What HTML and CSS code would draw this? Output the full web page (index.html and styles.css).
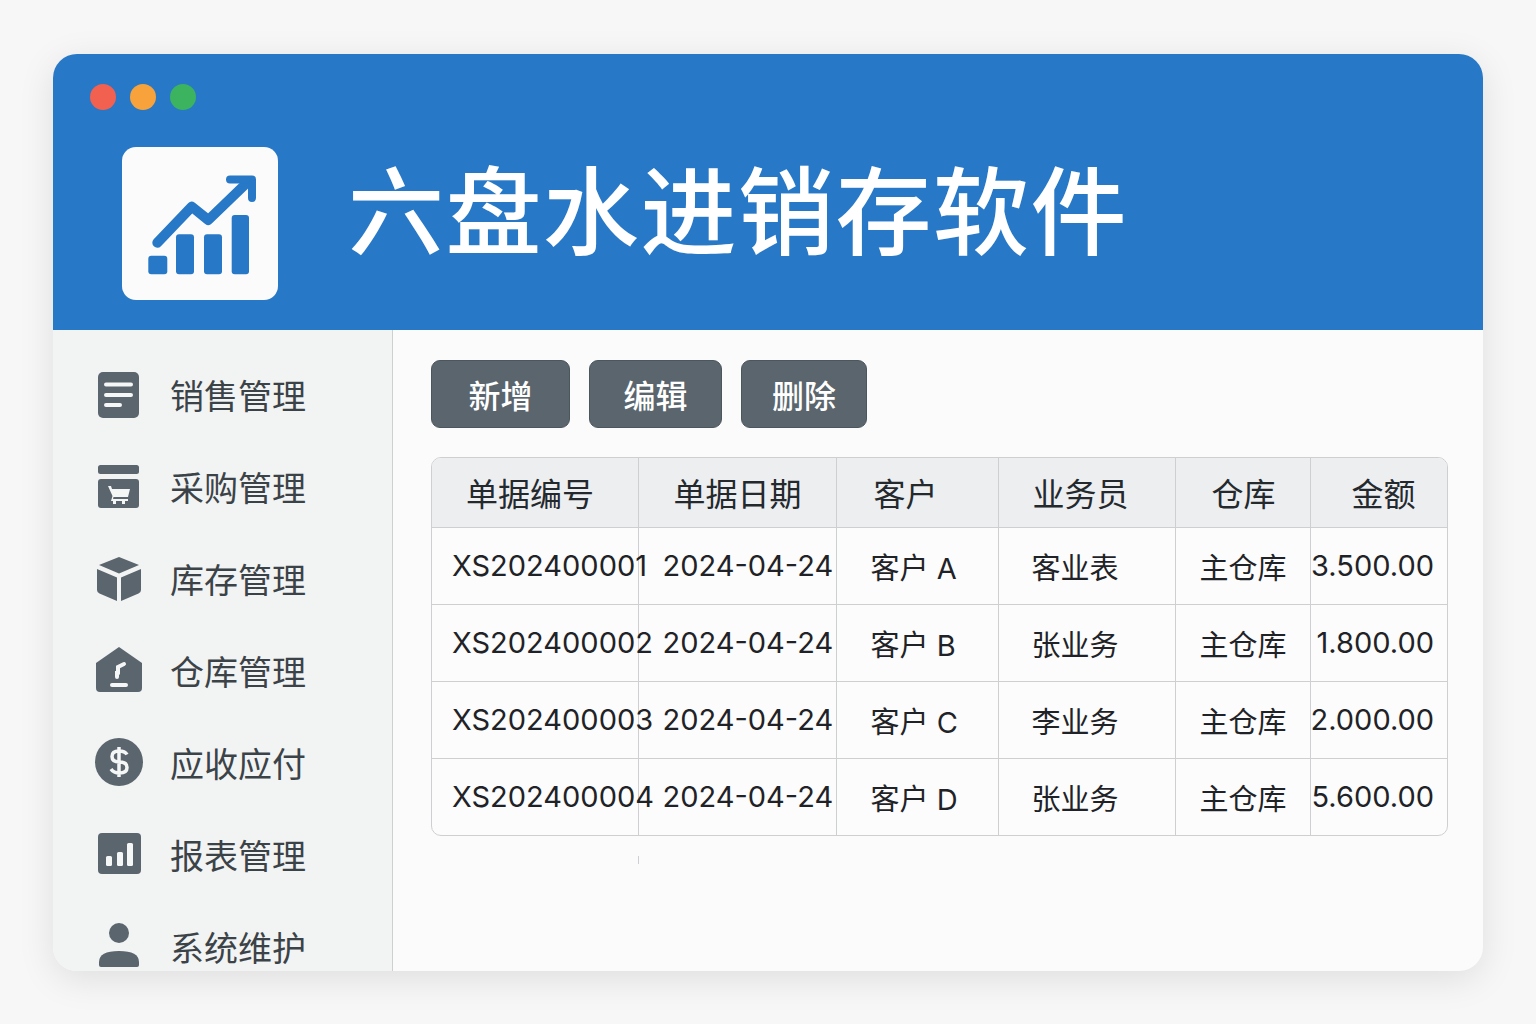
FILE: index.html
```html
<!DOCTYPE html>
<html lang="zh-CN">
<head>
    <meta charset="UTF-8">
    <title>六盘水进销存软件</title>
    <link rel="stylesheet" href="styles.css">
</head>
<body>
    <div class="window">
        <header class="topbar">
            <div class="dots">
                <span class="dot red"></span>
                <span class="dot orange"></span>
                <span class="dot green"></span>
            </div>
            <div class="brand">
                <div class="logo">
                    <svg width="156" height="153" viewBox="0 0 156 153">
                        <rect x="26.3" y="108.7" width="19" height="18.6" rx="3"/>
                        <rect x="54" y="87.3" width="18" height="40" rx="3"/>
                        <rect x="82" y="87.3" width="18" height="40" rx="3"/>
                        <rect x="109.7" y="68" width="17.3" height="59.3" rx="3"/>
                        <polyline class="trend" points="35.3,95.7 69.7,59.7 86.3,73 124.7,36"/>
                        <polyline class="head" points="108,32.5 130,32.5 130,51"/>
                    </svg>
                </div>
                <h1>六盘水进销存软件</h1>
            </div>
        </header>

        <div class="content">
            <nav class="sidebar">
                <div class="nav-item">
                    <svg class="icon" viewBox="0 0 48 48">
                        <rect x="3" y="2" width="41" height="46" rx="5"/>
                        <path class="cut" d="M11 14.5h25M11 25h25M11 35h14"/>
                    </svg>
                    <span>销售管理</span>
                </div>
                <div class="nav-item">
                    <svg class="icon" viewBox="0 0 48 48">
                        <rect x="3" y="3" width="41" height="9" rx="2.5"/>
                        <rect x="3" y="17" width="41" height="29" rx="3"/>
                        <path class="cut-fill" d="M13 24h3l1 3h18l-2 8H18.500l-0.500 2H33v2h-3v3h-3v-3h-6v3h-3v-3h-2l1.500-5z"/>
                    </svg>
                    <span>采购管理</span>
                </div>
                <div class="nav-item">
                    <svg class="icon" viewBox="0 0 48 48">
                        <path d="M24 3l20 8-20 8.500L4 11z"/>
                        <path d="M2 15l20 8.500V47L4.500 39.500Q2 38.500 2 36z"/>
                        <path d="M46 15l-20 8.500V47l17.500-7.500Q46 38.500 46 36z"/>
                    </svg>
                    <span>库存管理</span>
                </div>
                <div class="nav-item">
                    <svg class="icon" viewBox="0 0 48 48">
                        <path d="M24 1L47 17v25q0 4-4 4H5q-4 0-4-4V17z"/>
                        <path class="cut" d="M23 27v-6l6-3"/>
                        <path class="cut" d="M17 39h14"/>
                        <path class="cut" d="M23 27h-1v4"/>
                    </svg>
                    <span>仓库管理</span>
                </div>
                <div class="nav-item">
                    <svg class="icon" viewBox="0 0 48 48">
                        <circle cx="24" cy="24" r="24"/>
                        <path class="dollar" d="M32 16.500q-2-3.500-8-3.500-7 0-7 5.500t7.500 5.500 7.500 5.500-7.500 5.500q-6 0-8.500-4M24 9v30"/>
                    </svg>
                    <span>应收应付</span>
                </div>
                <div class="nav-item">
                    <svg class="icon" viewBox="0 0 48 48">
                        <rect x="3" y="3" width="43" height="41" rx="4"/>
                        <rect class="cut-fill" x="11" y="26" width="6" height="10" rx="1.500"/>
                        <rect class="cut-fill" x="22" y="22" width="6" height="14" rx="1.500"/>
                        <rect class="cut-fill" x="32" y="13" width="6" height="23" rx="1.500"/>
                    </svg>
                    <span>报表管理</span>
                </div>
                <div class="nav-item">
                    <svg class="icon" viewBox="0 0 48 48">
                        <circle cx="24" cy="11" r="10"/>
                        <path d="M4 43v-3q0-11 20-11t20 11v3q0 2-2 2H6q-2 0-2-2z"/>
                    </svg>
                    <span>系统维护</span>
                </div>
            </nav>

            <main class="main">
                <div class="actions">
                    <button class="btn btn-add">新增</button>
                    <button class="btn btn-edit">编辑</button>
                    <button class="btn btn-del">删除</button>
                </div>

                <div class="table-wrap">
                    <table>
                        <colgroup>
                            <col class="col-no">
                            <col class="col-date">
                            <col class="col-customer">
                            <col class="col-staff">
                            <col class="col-store">
                            <col class="col-amount">
                        </colgroup>
                        <thead>
                            <tr>
                                <th>单据编号</th>
                                <th>单据日期</th>
                                <th>客户</th>
                                <th>业务员</th>
                                <th>仓库</th>
                                <th>金额</th>
                            </tr>
                        </thead>
                        <tbody>
                            <tr>
                                <td>XS202400001</td>
                                <td>2024-04-24</td>
                                <td>客户 A</td>
                                <td>客业表</td>
                                <td>主仓库</td>
                                <td>3.500.00</td>
                            </tr>
                            <tr>
                                <td>XS202400002</td>
                                <td>2024-04-24</td>
                                <td>客户 B</td>
                                <td>张业务</td>
                                <td>主仓库</td>
                                <td>1.800.00</td>
                            </tr>
                            <tr>
                                <td>XS202400003</td>
                                <td>2024-04-24</td>
                                <td>客户 C</td>
                                <td>李业务</td>
                                <td>主仓库</td>
                                <td>2.000.00</td>
                            </tr>
                            <tr>
                                <td>XS202400004</td>
                                <td>2024-04-24</td>
                                <td>客户 D</td>
                                <td>张业务</td>
                                <td>主仓库</td>
                                <td>5.600.00</td>
                            </tr>
                        </tbody>
                    </table>
                    <span class="tick"></span>
                </div>
            </main>
        </div>
    </div>
</body>
</html>
```

FILE: styles.css
```css
:root {
    --blue: #2778c7;
    --slate: #5a656d;
    --line: #cdcfd1;
    --ink: #24292e;
}

* {
    box-sizing: border-box;
    margin: 0;
    padding: 0;
}

body {
    background: #f7f7f7;
    padding: 54px 53px 0;
    height: 1024px;
    overflow: hidden;
    font-family: Inter, "Noto Sans CJK SC", sans-serif;
    color: var(--ink);
}

.window {
    height: 917px;
    border-radius: 24px;
    overflow: hidden;
    background: #fbfbfb;
    box-shadow: 0 8px 36px rgba(0, 0, 0, 0.1);
    display: flex;
    flex-direction: column;
}

/* top bar */
.topbar {
    height: 276px;
    flex: none;
    background: var(--blue);
    padding: 30px 37px 0;
}

.dots {
    display: flex;
    gap: 14px;
    height: 26px;
}

.dot {
    width: 26px;
    height: 26px;
    border-radius: 50%;
}

.dot.red { background: #f2604f; }
.dot.orange { background: #f7a23b; }
.dot.green { background: #3bb35f; }

.brand {
    display: flex;
    align-items: flex-start;
    gap: 70px;
    margin: 37px 0 0 32px;
}

.logo {
    width: 156px;
    height: 153px;
    background: #fbfbfb;
    border-radius: 14px;
    flex: none;
}

.logo svg {
    display: block;
    fill: var(--blue);
}

.logo .trend,
.logo .head {
    fill: none;
    stroke: var(--blue);
    stroke-linecap: round;
    stroke-linejoin: round;
}

.logo .trend { stroke-width: 10; }
.logo .head { stroke-width: 8; }

h1 {
    color: #fff;
    font-size: 96px;
    font-weight: 500;
    letter-spacing: 1.5px;
    line-height: 130px;
    white-space: nowrap;
}

/* sidebar */
.content {
    flex: 1;
    display: flex;
    min-height: 0;
}

.sidebar {
    width: 340px;
    flex: none;
    background: #f2f3f3;
    border-right: 1px solid var(--line);
    padding: 18px 0 0 42px;
    overflow: hidden;
}

.nav-item {
    height: 92px;
    display: flex;
    align-items: center;
    gap: 27px;
    font-size: 34px;
    color: #3c4348;
}

.icon {
    width: 48px;
    height: 48px;
    flex: none;
    fill: var(--slate);
}

.icon .cut {
    fill: none;
    stroke: #f5f6f6;
    stroke-width: 4;
    stroke-linecap: round;
}

.icon .cut-fill {
    fill: #f5f6f6;
}

.icon .dollar {
    fill: none;
    stroke: #f5f6f6;
    stroke-width: 3.500;
}

/* main area */
.main {
    flex: 1;
    padding: 30px 35px 0 38px;
}

.actions {
    display: flex;
    gap: 19px;
    margin-bottom: 29px;
}

.btn {
    height: 68px;
    background: var(--slate);
    border: 1px solid #4c565d;
    border-radius: 9px;
    color: #fff;
    font-family: inherit;
    font-size: 32px;
    font-weight: 500;
}

.btn-add { width: 139px; }
.btn-edit { width: 133px; }
.btn-del { width: 126px; }

.table-wrap {
    position: relative;
    border: 1px solid var(--line);
    border-radius: 10px;
    background: #fcfcfc;
}

table {
    width: 100%;
    table-layout: fixed;
    border-collapse: collapse;
    font-size: 29px;
}

.col-no { width: 206px; }
.col-date { width: 198px; }
.col-customer { width: 162px; }
.col-staff { width: 177px; }
.col-store { width: 135px; }

th,
td {
    border-left: 1px solid var(--line);
    border-top: 1px solid var(--line);
    text-align: left;
    white-space: nowrap;
}

th:first-child,
td:first-child {
    border-left: none;
}

tr:first-child th {
    border-top: none;
}

th {
    height: 69px;
    background: #eceef0;
    font-size: 32px;
    font-weight: 400;
}

thead th:first-child { border-top-left-radius: 9px; }
thead th:last-child { border-top-right-radius: 9px; }

td {
    height: 77px;
    color: #1f2327;
}

th:nth-child(1) { padding-left: 34px; }
th:nth-child(2) { padding-left: 35px; }
th:nth-child(3) { padding-left: 37px; }
th:nth-child(4) { padding-left: 34px; }
th:nth-child(5) { padding-left: 36px; }
th:nth-child(6) { padding-left: 41px; }

td:nth-child(1) { padding-left: 20px; }
td:nth-child(2) { padding-left: 24px; }
td:nth-child(3) { padding-left: 34px; }
td:nth-child(4) { padding-left: 33px; }
td:nth-child(5) { padding-left: 24px; }
td:nth-child(6) { padding-right: 13px; text-align: right; }

.tick {
    position: absolute;
    left: 206px;
    top: 398px;
    width: 1px;
    height: 8px;
    background: var(--line);
}
```
